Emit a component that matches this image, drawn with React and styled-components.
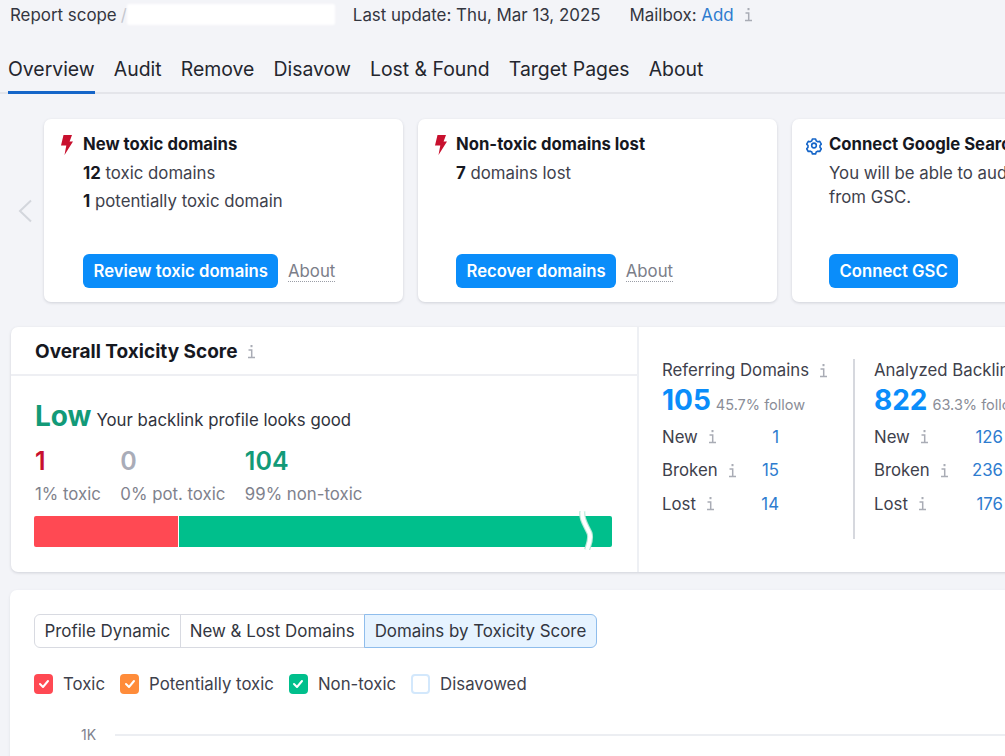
import React from "react";
import styled, { createGlobalStyle } from "styled-components";

const Global = createGlobalStyle`
  html, body { margin: 0; padding: 0; background: #f3f4f8; }
  body { font-family: Inter, "Noto Sans", sans-serif; color: #2b2e38; }
`;
const Page = styled.div`
  width: 1005px; height: 756px; overflow: hidden; background: #f3f4f8;
  display: flex; flex-direction: column;
`;
const TopBar = styled.div`
  flex: none; height: 25px; box-sizing: border-box; padding: 4px 0 0 10px; display: flex; align-items: center;
  font-size: 16.9px; color: #333640; white-space: nowrap;
`;
const Slash = styled.span`color: #c4c7cf; margin-left: 4px;`;
const Redact = styled.span`
  width: 208px; height: 21px; background: #fff; border-radius: 2px; filter: blur(1px); flex: none;
`;
const Update = styled.span`margin-left: 18px;`;
const Mailbox = styled.span`margin-left: 29px;`;
const Link = styled.span`color: #2e7ccf;`;
const InfoGap = styled.span`width: 10px; flex: none;`;
const Tabs = styled.nav`
  flex: none; margin-top: 27px; height: 42px; display: flex; gap: 19.200px; padding-left: 8px;
  border-bottom: 2px solid #e4e5ea; box-sizing: border-box;
`;
const Tab = styled.div`
  height: 42px; box-sizing: border-box; padding-top: 5px; font-size: 19.4px; line-height: 24px; color: #24262e;
  border-bottom: ${p => (p.$active ? "3px solid #1565c8" : "none")};
`;
const Carousel = styled.div`
  flex: none; margin-top: 25px; display: flex; align-items: center; height: 183px; padding-left: 18px;
`;
const Arrow = styled.div`width: 26px; flex: none; display: flex;`;
const Cards = styled.div`display: flex; gap: 15px; flex: none;`;
const Card = styled.div`
  width: 359px; height: 183px; flex: none; background: #fff; border-radius: 7px; box-sizing: border-box;
  box-shadow: 0 1px 3px rgba(50,55,80,.18); padding: 14px 0 14px ${p => p.$pad}px; display: flex; gap: ${p => p.$gap}px;
`;
const IconCol = styled.div`width: 16px; flex: none; display: flex; justify-content: center; padding-top: 2px;`;
const CardBody = styled.div`display: flex; flex-direction: column; flex: 1; min-width: 0;`;
const CardTitle = styled.div`font-size: 16.7px; font-weight: 700; color: #16181f; line-height: 22px; white-space: nowrap;`;
const Line = styled.div`font-size: 16.8px; line-height: 28px; color: #3e414c; white-space: nowrap; margin-top: ${p => (p.$first ? "4px" : "0")};`;
const Para = styled.div`font-size: 16.8px; line-height: 24px; color: #3e414c; white-space: nowrap; margin-top: 6px;`;
const Num = styled.b`color: #16181f; font-weight: 700;`;
const Actions = styled.div`margin-top: auto; display: flex; align-items: center; gap: 9.500px;`;
const Button = styled.div`
  height: 34px; padding: 0 10.500px; background: #0a8dfa; color: #fff; border-radius: 6px;
  display: flex; align-items: center; font-size: 16.7px; font-weight: 600; white-space: nowrap;
`;
const About = styled.span`font-size: 16.8px; color: #7b7e89; border-bottom: 1px dotted #9a9da6; line-height: 20px;`;
const ScorePanel = styled.section`
  margin: 25px 0 0 11px; height: 245px; width: 1010px; flex: none; background: #fff; border-radius: 7px 0 0 7px;
  box-shadow: 0 1px 3px rgba(50,55,80,.18); display: flex;
`;
const ScoreLeft = styled.div`
  width: 626px; flex: none; border-right: 2px solid #eef0f4; display: flex; flex-direction: column;
`;
const ScoreHead = styled.div`
  height: 49px; box-sizing: border-box; border-bottom: 2px solid #eeeff3; padding: 2px 0 0 24px;
  display: flex; align-items: center; gap: 10px; font-size: 19px; font-weight: 700; color: #16181f;
`;
const ScoreBody = styled.div`padding: 23px 25px 0 24px; display: flex; flex-direction: column;`;
const Verdict = styled.div`display: flex; align-items: baseline; gap: 5px; height: 36px;`;
const Low = styled.span`font-size: 28px; font-weight: 700; color: #129a78;`;
const VerdictText = styled.span`font-size: 16.8px; color: #30333d;`;
const Stats = styled.div`display: flex; gap: 19.500px; margin-top: 11px;`;
const Stat = styled.div`display: flex; flex-direction: column;`;
const StatNum = styled.div`font-size: 25px; font-weight: 600; line-height: 30px; color: ${p => p.$c};`;
const StatLabel = styled.div`font-size: 16.8px; line-height: 24px; color: #7f828d; margin-top: 6px; white-space: nowrap;`;
const Bar = styled.div`position: relative; display: flex; height: 31px; margin: 10px 0 0 -1px; width: 578px;`;
const Seg = styled.div`background: ${p => p.$c}; border-radius: ${p => p.$r}; flex: ${p => p.$f}; margin-left: ${p => p.$ml || 0}px;`;
const BreakMark = styled.svg`position: absolute; left: 542px; top: -5px;`;
const ScoreRight = styled.div`display: flex; padding: 32px 0 0 23px; align-items: flex-start;`;
const Metric = styled.div`width: ${p => p.$w}px; flex: none; white-space: nowrap;`;
const Sep = styled.div`width: 2px; height: 180px; background: #d6d8de; margin-right: 19px; flex: none;`;
const MetricLabel = styled.div`font-size: 16.8px; line-height: 22px; color: #3e414c; display: flex; align-items: center; gap: 10px;`;
const MetricValue = styled.div`display: flex; align-items: baseline; gap: 5px; height: 34px; margin-top: 2px;`;
const Big = styled.span`font-size: 28px; font-weight: 700; color: #0a8dfa; line-height: 34px;`;
const Follow = styled.span`font-size: 14.5px; color: #8a8d97;`;
const Rows = styled.div`display: grid; grid-template-columns: ${p => p.$w}px; margin-top: 3px;`;
const Row = styled.div`height: 33.500px; display: flex; align-items: center; font-size: 16.8px; color: #3e414c; gap: 10px;`;
const RowVal = styled.span`margin-left: auto; color: #2e7ccf;`;
const ChartPanel = styled.section`
  margin: 18px 0 0 10px; width: 1010px; height: 180px; flex: none; background: #fff; border-radius: 7px 0 0 0; padding: 24px 0 0 24px; box-sizing: border-box;
  box-shadow: 0 1px 3px rgba(50,55,80,.1);
`;
const Switch = styled.div`display: inline-flex; height: 34px;`;
const SwitchBtn = styled.div`
  box-sizing: border-box; height: 34px; display: flex; align-items: center; padding: 0 ${p => p.$pad}px; font-size: 16.9px; white-space: nowrap; color: #333640;
  border: 1px solid ${p => (p.$on ? "#8fbdec" : "#d8dae1")};
  margin-left: ${p => (p.$first ? "0" : "-1px")};
  background: ${p => (p.$on ? "#e6f3ff" : "#fff")};
  border-radius: ${p => (p.$first ? "6px 0 0 6px" : p.$on ? "0 6px 6px 0" : "0")};
`;
const Legend = styled.div`display: flex; align-items: center; margin-top: 26px; height: 20px;`;
const LegendItem = styled.div`display: flex; align-items: center; gap: 10px; margin-right: 15px; font-size: 16.8px; color: #3e414c;`;
const Box = styled.span`
  box-sizing: border-box; width: 19px; height: 20px; border-radius: 4px; display: flex; align-items: center; justify-content: center;
  background: ${p => p.$c || "#fff"}; border: ${p => (p.$c ? "none" : "2px solid #d3e8fc")};
`;
const Axis = styled.div`display: flex; align-items: center; margin-top: 32px; gap: 19px; padding-left: 47px;`;
const AxisLabel = styled.span`font-size: 14px; color: #7f828d;`;
const Grid = styled.div`height: 2px; background: #eceef2; flex: 1;`;

const Info = () => (
  <svg width="9" height="15" viewBox="0 0 9 15" fill="none" stroke="#a9acb5" strokeWidth="1.5">
    <path d="M4.500 1v2.200" strokeWidth="2" />
    <path d="M1.500 6h3.200v7M1 13.500h7" />
  </svg>
);
const Bolt = () => (
  <svg width="13" height="20" viewBox="0 0 13 20"><path d="M3.500 0h8.500L9.600 6.500H13L4.500 20l1.800-9.500H1z" fill="#c8102e" /></svg>
);
const Gear = () => (
  <svg width="21" height="21" viewBox="0 0 24 24" fill="none" stroke="#1565c8" strokeWidth="2.400" strokeLinejoin="round">
    <path d="M9.600 2.200h4.800l.9 2.800 2.400 1.400 2.900-.6 2.400 4.100-2 2.100v2.800l2 2.100-2.400 4.100-2.900-.6-2.400 1.400-.9 2.800H9.600l-.9-2.800-2.400-1.400-2.900.6-2.400-4.100 2-2.100v-2.800l-2-2.100 2.400-4.100 2.900.6 2.400-1.400z" />
    <circle cx="12" cy="12" r="3.500" />
  </svg>
);
const Check = () => (
  <svg width="12" height="10" viewBox="0 0 12 10" fill="none" stroke="#fff" strokeWidth="2" strokeLinecap="round" strokeLinejoin="round"><path d="M2 5l3 3 5-6" /></svg>
);

const rowsA = [["New", "1"], ["Broken", "15"], ["Lost", "14"]];
const rowsB = [["New", "126"], ["Broken", "236"], ["Lost", "176"]];

const MetricBlock = ({ label, value, follow, rows, w, rw }) => (
  <Metric $w={w}>
    <MetricLabel>{label}<Info /></MetricLabel>
    <MetricValue><Big>{value}</Big><Follow>{follow}</Follow></MetricValue>
    <Rows $w={rw}>
      {rows.map(([n, v]) => (
        <Row key={n}>{n}<Info /><RowVal>{v}</RowVal></Row>
      ))}
    </Rows>
  </Metric>
);

export default function App() {
  return (
    <Page>
      <Global />
      <TopBar>
        Report scope<Slash>/</Slash><Redact />
        <Update>Last update: Thu, Mar 13, 2025</Update>
        <Mailbox>Mailbox: <Link>Add</Link></Mailbox>
        <InfoGap /><Info />
      </TopBar>
      <Tabs>
        <Tab $active>Overview</Tab>
        <Tab>Audit</Tab>
        <Tab>Remove</Tab>
        <Tab>Disavow</Tab>
        <Tab>Lost &amp; Found</Tab>
        <Tab>Target Pages</Tab>
        <Tab>About</Tab>
      </Tabs>
      <Carousel>
        <Arrow>
          <svg width="15" height="24" viewBox="0 0 15 24" fill="none" stroke="#d3d6dc" strokeWidth="2"><path d="M13 1.500L2 12l11 10.500" /></svg>
        </Arrow>
        <Cards>
          <Card $pad={14} $gap={9}>
            <IconCol><Bolt /></IconCol>
            <CardBody>
              <CardTitle>New toxic domains</CardTitle>
              <Line $first><Num>12</Num> toxic domains</Line>
              <Line><Num>1</Num> potentially toxic domain</Line>
              <Actions><Button>Review toxic domains</Button><About>About</About></Actions>
            </CardBody>
          </Card>
          <Card $pad={14} $gap={8}>
            <IconCol><Bolt /></IconCol>
            <CardBody>
              <CardTitle>Non-toxic domains lost</CardTitle>
              <Line $first><Num>7</Num> domains lost</Line>
              <Actions><Button>Recover domains</Button><About>About</About></Actions>
            </CardBody>
          </Card>
          <Card $pad={14} $gap={7}>
            <IconCol><Gear /></IconCol>
            <CardBody>
              <CardTitle>Connect Google Search Console</CardTitle>
              <Para>You will be able to audit more<br />from GSC.</Para>
              <Actions><Button>Connect GSC</Button></Actions>
            </CardBody>
          </Card>
        </Cards>
      </Carousel>
      <ScorePanel>
        <ScoreLeft>
          <ScoreHead>Overall Toxicity Score <Info /></ScoreHead>
          <ScoreBody>
            <Verdict><Low>Low</Low><VerdictText>Your backlink profile looks good</VerdictText></Verdict>
            <Stats>
              <Stat><StatNum $c="#c8102e">1</StatNum><StatLabel>1% toxic</StatLabel></Stat>
              <Stat><StatNum $c="#a9acb8">0</StatNum><StatLabel>0% pot. toxic</StatLabel></Stat>
              <Stat><StatNum $c="#129a78">104</StatNum><StatLabel>99% non-toxic</StatLabel></Stat>
            </Stats>
            <Bar>
              <Seg $c="#ff4953" $f="0 0 144px" $r="2px 0 0 2px" />
              <Seg $c="#00bf8c" $f="1" $r="0 2px 2px 0" $ml={1} />
              <BreakMark width="20" height="39" viewBox="0 0 20 39" fill="none">
                <path d="M6.500 0C5 8 10 14 13.500 22c2 6-.5 11-2.500 17" stroke="#b5e8d6" strokeWidth="6" />
                <path d="M6.500 0C5 8 10 14 13.500 22c2 6-.5 11-2.500 17" stroke="#fff" strokeWidth="3.800" />
              </BreakMark>
            </Bar>
          </ScoreBody>
        </ScoreLeft>
        <ScoreRight>
          <MetricBlock label="Referring Domains" value="105" follow="45.7% follow" rows={rowsA} w={191} rw={117} />
          <Sep />
          <MetricBlock label="Analyzed Backlinks" value="822" follow="63.3% follow" rows={rowsB} w={200} rw={129} />
        </ScoreRight>
      </ScorePanel>
      <ChartPanel>
        <Switch>
          <SwitchBtn $first $pad={9.5}>Profile Dynamic</SwitchBtn>
          <SwitchBtn $pad={9}>New &amp; Lost Domains</SwitchBtn>
          <SwitchBtn $on $pad={10}>Domains by Toxicity Score</SwitchBtn>
        </Switch>
        <Legend>
          <LegendItem><Box $c="#ff4953"><Check /></Box>Toxic</LegendItem>
          <LegendItem><Box $c="#ff8c3a"><Check /></Box>Potentially toxic</LegendItem>
          <LegendItem><Box $c="#00bf8c"><Check /></Box>Non-toxic</LegendItem>
          <LegendItem><Box />Disavowed</LegendItem>
        </Legend>
        <Axis><AxisLabel>1K</AxisLabel><Grid /></Axis>
      </ChartPanel>
    </Page>
  );
}
